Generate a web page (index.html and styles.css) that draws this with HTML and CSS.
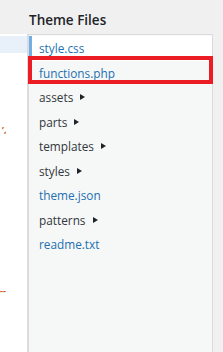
FILE: index.html
```html
<!DOCTYPE html>
<html>
<head>
<meta charset="utf-8">
<link rel="stylesheet" href="styles.css">
</head>
<body>
<div class="layout">
  <div class="aside">
    <div class="aside-hl"></div>
    <div class="mark mark-a">’,</div>
    <div class="mark mark-b">-‐</div>
  </div>
  <div class="main">
    <h2 class="title">Theme Files</h2>
    <ul class="panel">
      <li class="row active"><span class="link">style.css</span></li>
      <li class="row marked"><span class="link">functions.php</span></li>
      <li class="row"><span class="folder">assets</span><span class="tri"></span></li>
      <li class="row"><span class="folder">parts</span><span class="tri"></span></li>
      <li class="row"><span class="folder">templates</span><span class="tri"></span></li>
      <li class="row"><span class="folder">styles</span><span class="tri"></span></li>
      <li class="row"><span class="link">theme.json</span></li>
      <li class="row"><span class="folder">patterns</span><span class="tri"></span></li>
      <li class="row"><span class="link">readme.txt</span></li>
    </ul>
  </div>
</div>
</body>
</html>
```

FILE: styles.css
```css
html, body {
  margin: 0;
  padding: 0;
}
body {
  background: #f0f0f1;
  font-family: "Open Sans", "Noto Sans", sans-serif;
  width: 223px;
  height: 352px;
  overflow: hidden;
}
.layout {
  display: flex;
  height: 352px;
}
.aside {
  width: 27px;
  margin-top: 34px;
  background: #fff;
  border-right: 1px solid #dcdcde;
  display: flex;
  flex-direction: column;
}
.aside-hl {
  margin-top: 2px;
  height: 17px;
  background: #e8f0fa;
}
.mark {
  font-size: 9px;
  line-height: 10px;
  color: #c8561e;
  padding-left: 2px;
}
.mark-a {
  margin-top: 72px;
  font-weight: bold;
}
.mark-b {
  margin-top: 151px;
  padding-left: 0;
  font-weight: bold;
}
.main {
  width: 185px;
  display: flex;
  flex-direction: column;
}
.title {
  margin: 0;
  height: 34px;
  box-sizing: border-box;
  padding: 10px 0 0 1px;
  font-size: 13.5px;
  line-height: 20px;
  font-weight: 600;
  color: #1d2327;
}
.panel {
  list-style: none;
  margin: 0;
  padding: 1px 0 0 0;
  flex: 1;
  background: #f6f7f7;
  border-top: 1px solid #dcdcde;
  border-left: 1px solid #dcdcde;
  border-right: 1px solid #dcdcde;
}
.row {
  height: 24.5px;
  display: flex;
  align-items: center;
  padding-left: 10px;
  font-size: 11.8px;
}
.row.active {
  background: #fff;
  box-shadow: inset 3px 0 0 #72aee6;
}
.row.marked {
  position: relative;
}
.row.marked::after {
  content: "";
  position: absolute;
  left: -1px;
  right: -1px;
  top: -5px;
  height: 28px;
  border: 4px solid #ec1c24;
  box-sizing: border-box;
}
.link {
  color: #2271b1;
}
.folder {
  color: #32373c;
}
.tri {
  width: 0;
  height: 0;
  margin-left: 7px;
  border-left: 5px solid #1d2327;
  border-top: 3.5px solid transparent;
  border-bottom: 3.5px solid transparent;
}
```
